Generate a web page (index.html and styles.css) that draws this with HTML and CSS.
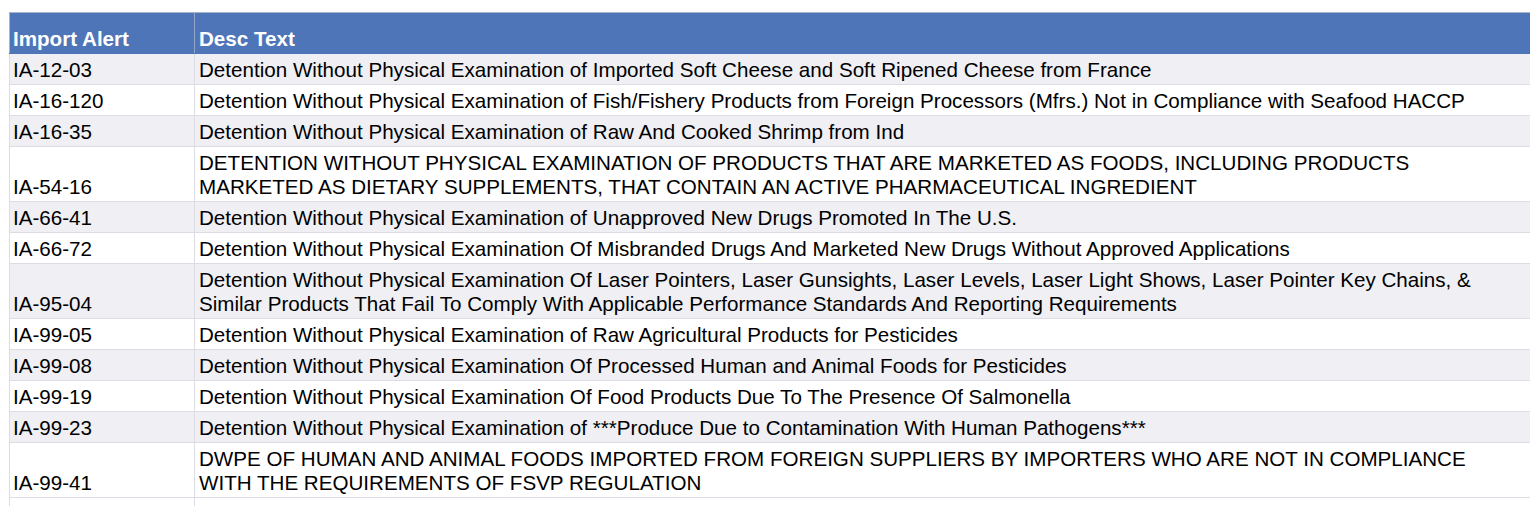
FILE: index.html
```html
<!DOCTYPE html>
<html>
<head>
<meta charset="utf-8">
<link rel="stylesheet" href="styles.css">
</head>
<body>
<div class="sheet">
<table class="grid">
  <colgroup><col class="c-id"><col class="c-desc"></colgroup>
  <thead>
    <tr><th>Import Alert</th><th>Desc Text</th></tr>
  </thead>
  <tbody>
    <tr class="alt"><td>IA-12-03</td><td>Detention Without Physical Examination of Imported Soft Cheese and Soft Ripened Cheese from France</td></tr>
    <tr><td>IA-16-120</td><td>Detention Without Physical Examination of Fish/Fishery Products from Foreign Processors (Mfrs.) Not in Compliance with Seafood HACCP</td></tr>
    <tr class="alt"><td>IA-16-35</td><td>Detention Without Physical Examination of Raw And Cooked Shrimp from Ind</td></tr>
    <tr><td>IA-54-16</td><td>DETENTION WITHOUT PHYSICAL EXAMINATION OF PRODUCTS THAT ARE MARKETED AS FOODS, INCLUDING PRODUCTS<br>MARKETED AS DIETARY SUPPLEMENTS, THAT CONTAIN AN ACTIVE PHARMACEUTICAL INGREDIENT</td></tr>
    <tr class="alt"><td>IA-66-41</td><td>Detention Without Physical Examination of Unapproved New Drugs Promoted In The U.S.</td></tr>
    <tr><td>IA-66-72</td><td>Detention Without Physical Examination Of Misbranded Drugs And Marketed New Drugs Without Approved Applications</td></tr>
    <tr class="alt"><td>IA-95-04</td><td>Detention Without Physical Examination Of Laser Pointers, Laser Gunsights, Laser Levels, Laser Light Shows, Laser Pointer Key Chains, &amp;<br>Similar Products That Fail To Comply With Applicable Performance Standards And Reporting Requirements</td></tr>
    <tr><td>IA-99-05</td><td>Detention Without Physical Examination of Raw Agricultural Products for Pesticides</td></tr>
    <tr class="alt"><td>IA-99-08</td><td>Detention Without Physical Examination Of Processed Human and Animal Foods for Pesticides</td></tr>
    <tr><td>IA-99-19</td><td>Detention Without Physical Examination Of Food Products Due To The Presence Of Salmonella</td></tr>
    <tr class="alt"><td>IA-99-23</td><td>Detention Without Physical Examination of ***Produce Due to Contamination With Human Pathogens***</td></tr>
    <tr><td>IA-99-41</td><td>DWPE OF HUMAN AND ANIMAL FOODS IMPORTED FROM FOREIGN SUPPLIERS BY IMPORTERS WHO ARE NOT IN COMPLIANCE<br>WITH THE REQUIREMENTS OF FSVP REGULATION</td></tr>
    <tr><td>&nbsp;</td><td>&nbsp;</td></tr>
  </tbody>
</table>
</div>
</body>
</html>
```
FILE: styles.css
```css
html, body {
  margin: 0;
  padding: 0;
  background: #ffffff;
  overflow: hidden;
}
.sheet {
  padding: 12px 0 0 9px;
  width: 1521px;
  height: 494px;
  overflow: hidden;
}
.grid {
  border-collapse: collapse;
  table-layout: fixed;
  width: 1540px;
  font-family: "Liberation Sans", Arial, Helvetica, sans-serif;
  font-size: 20.6px;
  line-height: 24px;
  color: #000;
}
.c-id { width: 185px; }
.grid th, .grid td {
  vertical-align: bottom;
  text-align: left;
  padding: 4px 3px 2px 3px;
  border: 1px solid #dcdce4;
  white-space: nowrap;
}
.grid thead th {
  height: 38px;
  padding-top: 0;
  background: #4f75b9;
  color: #ffffff;
  font-weight: bold;
  border-color: #a8b4cc #95a7c9 #4f75b9 #a8b4cc;
}
.grid tbody tr.alt td { background: #efeff4; }
.grid td:last-child, .grid th:last-child { padding-left: 4px; }
```
